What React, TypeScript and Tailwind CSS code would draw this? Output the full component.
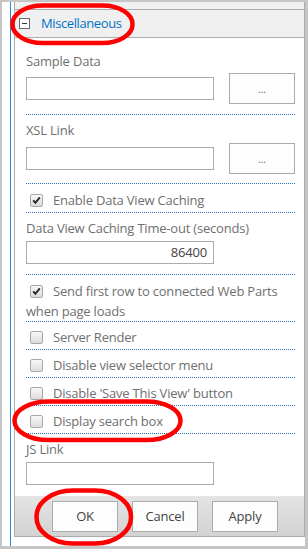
import type { ReactNode } from "react";

function CheckBox({ checked }: { checked?: boolean }) {
  return (
    <span className="relative ml-[4px] mr-[10px] inline-block h-[13px] w-[13px] rounded-[2px] border border-[#a8a8a8] bg-linear-to-b from-[#f8f8f8] to-[#dcdcdc] align-[-2px]">
      {checked && (
        <svg viewBox="0 0 13 13" className="absolute left-[-1px] top-[-1px] h-[13px] w-[13px]">
          <path d="M3.2 6.4 L5.4 8.8 L9.8 3.4" fill="none" stroke="#2b2b2b" strokeWidth="2" />
        </svg>
      )}
    </span>
  );
}

function CheckRow({ label, checked }: { label: string; checked?: boolean }) {
  return (
    <div className="border-b border-dotted border-[#2f6fc0] pb-[2px] pt-[5px] leading-[20px]">
      <CheckBox checked={checked} />
      {label}
    </div>
  );
}

function TextBox({ value }: { value?: string }) {
  return (
    <div className="flex h-[23px] w-[188px] items-center justify-end border border-[#ababab] bg-white pr-[6px] leading-none text-[#444]">
      {value}
    </div>
  );
}

function Field({ label, children, top = "pt-[6px]", bottom = "pb-[9px]" }: { label: string; children: ReactNode; top?: string; bottom?: string }) {
  return (
    <div className={`border-b border-dotted border-[#2f6fc0] ${top} ${bottom}`}>
      <div className="h-[18px] leading-[18px]">{label}</div>
      {children}
    </div>
  );
}

function PickerRow({ gap }: { gap: string }) {
  return (
    <div className={`flex items-center justify-between ${gap}`}>
      <TextBox />
      <button className="h-[31px] w-[66px] border border-[#ababab] bg-[#fdfdfd] text-[10px] leading-none text-[#666]">...</button>
    </div>
  );
}

function BarButton({ label }: { label: string }) {
  return (
    <button className="h-[31px] w-[66px] border border-[#ababab] bg-[#fdfdfd] text-[13px] text-[#444]">{label}</button>
  );
}

export default function App() {
  return (
    <div className="relative h-[549px] w-[308px] overflow-hidden bg-[#c6c6c6] pb-[3px] pl-[2px] pr-[3px] pt-[2px] font-['Open_Sans',sans-serif] text-[13px] tracking-[-0.2px] text-[#6f6f6f]">
      <div className="flex h-full bg-white pl-[8px]">
        <div className="w-px bg-[#2a8ad8]" />
        <div className="w-[3px]" />
        <div className="flex flex-1 flex-col pb-[9px]">
          <div className="flex flex-1 flex-col border-x border-b border-[#ababab]">
            <div className="h-[8px] shrink-0 border-b border-[#ababab] bg-[#f0f0f0]" />
            <div className="flex h-[28px] shrink-0 items-center border-b border-[#ababab] bg-[#f0f0f0] pl-[4px]">
              <span className="relative mr-[11px] h-[11px] w-[11px] border border-[#6a6a6a] bg-white">
                <span className="absolute left-[2px] top-[4px] h-px w-[5px] bg-[#333]" />
              </span>
              <span className="text-[13px] tracking-[-0.4px] text-[#0072c6]">Miscellaneous</span>
            </div>

            <div className="flex flex-1 flex-col pl-[11px] pr-[9px]">
              <Field label="Sample Data" top="pt-[14px]" bottom="pb-[10px]">
                <PickerRow gap="mt-[3px]" />
              </Field>
              <Field label="XSL Link">
                <PickerRow gap="mt-[4px]" />
              </Field>
              <div className="border-b border-dotted border-[#2f6fc0] pb-[2px] pt-[6px] leading-[20px]">
                <CheckBox checked />
                Enable Data View Caching
              </div>
              <Field label="Data View Caching Time-out (seconds)" bottom="pb-[10px]">
                <div className="mt-[4px]">
                  <TextBox value="86400" />
                </div>
              </Field>
              <div className="border-b border-dotted border-[#2f6fc0] pt-[6px] leading-[20px]">
                <CheckBox checked />
                Send first row to connected Web Parts when page loads
              </div>
              <CheckRow label="Server Render" />
              <CheckRow label="Disable view selector menu" />
              <CheckRow label="Disable 'Save This View' button" />
              <CheckRow label="Display search box" />
              <div className="pt-[6px]">
                <div className="h-[18px] leading-[18px]">JS Link</div>
                <div className="mt-[4px]">
                  <TextBox />
                </div>
              </div>
            </div>

            <div className="flex h-[40px] shrink-0 justify-end gap-[14px] bg-linear-to-b from-[#e4e4e4] to-[#d3d3d3] pr-[26px] pt-[5px]">
              <BarButton label="OK" />
              <BarButton label="Cancel" />
              <BarButton label="Apply" />
            </div>
          </div>
        </div>
      </div>

      <svg className="pointer-events-none absolute inset-0" width="308" height="549" viewBox="0 0 308 549">
        <g fill="none" stroke="#ff0000" strokeWidth="4.5">
          <rect x="12.5" y="5.5" width="120" height="37.5" rx="30" ry="18.5" />
          <rect x="14.5" y="401.5" width="166" height="38.5" rx="34" ry="19" />
          <rect x="36.5" y="490.5" width="94.5" height="53" rx="36" ry="26" />
        </g>
      </svg>
    </div>
  );
}
